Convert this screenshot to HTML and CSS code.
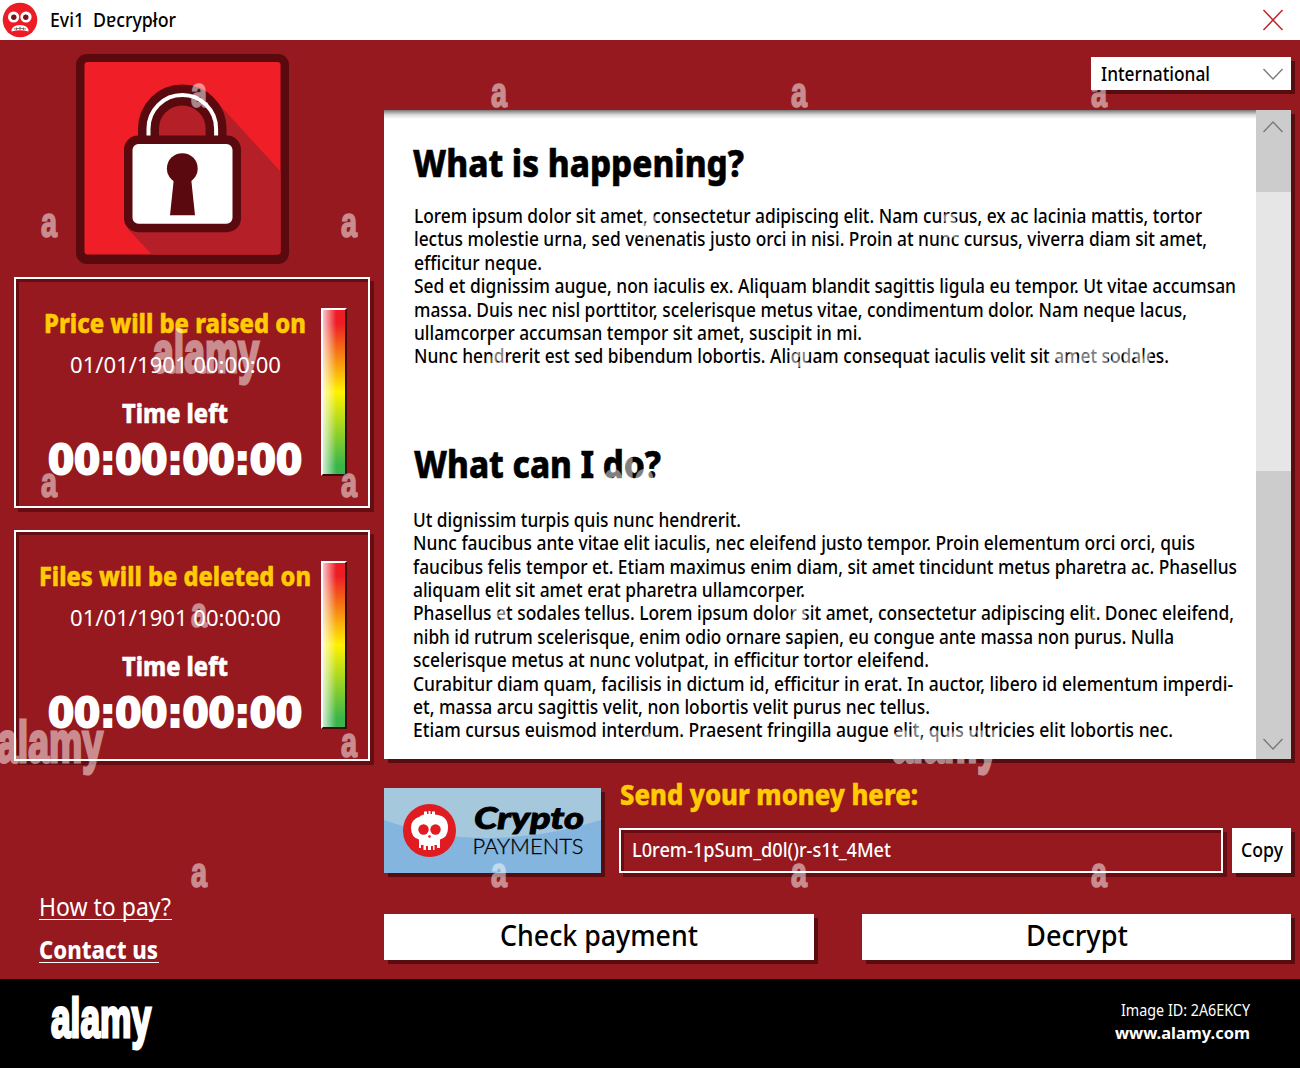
FILE: index.html
```html
<!DOCTYPE html>
<html lang="en">
<head>
<meta charset="utf-8">
<title>Evi1 Decryptor</title>
<link rel="stylesheet" href="styles.css">
</head>
<body>
<div class="window">
  <header class="titlebar">
    <svg class="face" width="36" height="36" viewBox="0 0 36 36">
      <circle cx="18" cy="18" r="17.3" fill="#ed1c24"/>
      <circle cx="11.6" cy="15" r="5.6" fill="#fff"/><circle cx="24" cy="15" r="5.6" fill="#fff"/>
      <circle cx="11.8" cy="15.2" r="2.7" fill="#7d1216"/><circle cx="23.8" cy="15.2" r="2.7" fill="#7d1216"/>
      <path d="M9.500 29.500q0-6.500 8.500-6.500t8.500 6.500q-8.500-2.500-17 0z" fill="#fff"/>
      <path d="M12 27q6-1.500 12 0M14.500 25.500v2.500M18 24.500v3.500M21.500 25.500v2.500" stroke="#555" fill="none" stroke-width=".8"/>
    </svg>
    <svg class="label app-name" width="128" height="24"><text x="0" y="19" textLength="34" lengthAdjust="spacingAndGlyphs">Evi1</text><text x="43" y="19" textLength="83" lengthAdjust="spacingAndGlyphs">Dɐcrypłor</text></svg>
    <svg class="close" width="22" height="22" viewBox="0 0 22 22"><path d="M1.500 1l19 20M20.500 1l-19 20" stroke="#c1272d" stroke-width="1.500" fill="none"/></svg>
  </header>

  <div class="content">
    <aside class="side">
      <svg class="lock" width="213" height="210" viewBox="0 0 213 211" preserveAspectRatio="none">
        <rect width="213" height="211" rx="11" fill="#5a0a0f"/>
        <rect x="8.500" y="8" width="196" height="193.500" rx="3" fill="#f01e27"/>
        <path d="M138 45L204.500 118V198.500q0 3-3 3H76L52 176z" fill="#b51f28"/>
        <path d="M66 84V77a40 40 0 0 1 80 0v7" fill="#b51f28" stroke="none"/>
        <path d="M72.500 90V75a33.800 33.800 0 0 1 67.600 0v15" fill="none" stroke="#5a0a0f" stroke-width="21"/>
        <path d="M72.500 90V75a33.800 33.800 0 0 1 67.600 0v15" fill="none" stroke="#fff" stroke-width="4"/>
        <rect x="48" y="82" width="117" height="97" rx="14" fill="#5a0a0f"/>
        <rect x="56.500" y="90.500" width="100" height="80" rx="6" fill="#fff"/>
        <circle cx="106.300" cy="115" r="15.400" fill="#5a0a0f"/>
        <path d="M98 124h17l4 38H94z" fill="#5a0a0f"/>
      </svg>

      <section class="panel">
        <div class="countdown">
          <svg class="label warn" width="262" height="34"><text x="0" y="26.500" textLength="262" lengthAdjust="spacingAndGlyphs">Price will be raised on</text></svg>
          <svg class="label date" width="211" height="42"><text x="0" y="33" textLength="211" lengthAdjust="spacingAndGlyphs">01/01/1901 00:00:00</text></svg>
          <svg class="label left" width="106" height="48"><text x="0" y="40.500" textLength="106" lengthAdjust="spacingAndGlyphs">Time left</text></svg>
          <svg class="label clock" width="256" height="56"><text x="1" y="43.500" textLength="254" lengthAdjust="spacingAndGlyphs">00:00:00:00</text></svg>
        </div>
        <div class="meter"></div>
      </section>

      <section class="panel">
        <div class="countdown">
          <svg class="label warn" width="272" height="34"><text x="0" y="26.500" textLength="272" lengthAdjust="spacingAndGlyphs">Files will be deleted on</text></svg>
          <svg class="label date" width="211" height="42"><text x="0" y="33" textLength="211" lengthAdjust="spacingAndGlyphs">01/01/1901 00:00:00</text></svg>
          <svg class="label left" width="106" height="48"><text x="0" y="40.500" textLength="106" lengthAdjust="spacingAndGlyphs">Time left</text></svg>
          <svg class="label clock" width="256" height="56"><text x="1" y="43.500" textLength="254" lengthAdjust="spacingAndGlyphs">00:00:00:00</text></svg>
        </div>
        <div class="meter"></div>
      </section>

      <nav class="links">
        <a class="link"><svg class="label how" width="133" height="28"><text x="0" y="23" textLength="132" lengthAdjust="spacingAndGlyphs">How to pay?</text></svg></a>
        <a class="link"><svg class="label contact" width="120" height="28"><text x="0" y="23" textLength="119" lengthAdjust="spacingAndGlyphs">Contact us</text></svg></a>
      </nav>
    </aside>

    <main class="main">
      <div class="select">
        <svg class="label body" width="110" height="24"><text x="0" y="18.700" textLength="109" lengthAdjust="spacingAndGlyphs">International</text></svg>
        <svg width="20" height="12" viewBox="0 0 20 12"><path d="M.5 1L10 11 19.500 1" stroke="#777" stroke-width="1.300" fill="none"/></svg>
      </div>

      <div class="reader">
        <article class="article">
          <svg class="label heading" width="332" height="60"><text x="-1" y="46" textLength="331" lengthAdjust="spacingAndGlyphs">What is happening?</text></svg>
          <svg class="label body first" width="840" height="170">
            <text x="0" y="18" textLength="788" lengthAdjust="spacingAndGlyphs">Lorem ipsum dolor sit amet, consectetur adipiscing elit. Nam cursus, ex ac lacinia mattis, tortor</text>
            <text x="0" y="41.400" textLength="793" lengthAdjust="spacingAndGlyphs">lectus molestie urna, sed venenatis justo orci in nisi. Proin at nunc cursus, viverra diam sit amet,</text>
            <text x="0" y="64.800" textLength="128" lengthAdjust="spacingAndGlyphs">efficitur neque.</text>
            <text x="0" y="88.200" textLength="822" lengthAdjust="spacingAndGlyphs">Sed et dignissim augue, non iaculis ex. Aliquam blandit sagittis ligula eu tempor. Ut vitae accumsan</text>
            <text x="0" y="111.600" textLength="773" lengthAdjust="spacingAndGlyphs">massa. Duis nec nisl porttitor, scelerisque metus vitae, condimentum dolor. Nam neque lacus,</text>
            <text x="0" y="135" textLength="448" lengthAdjust="spacingAndGlyphs">ullamcorper accumsan tempor sit amet, suscipit in mi.</text>
            <text x="0" y="158.400" textLength="755" lengthAdjust="spacingAndGlyphs">Nunc hendrerit est sed bibendum lobortis. Aliquam consequat iaculis velit sit amet sodales.</text>
          </svg>
          <svg class="label heading" width="332" height="60"><text x="0" y="46" textLength="247" lengthAdjust="spacingAndGlyphs">What can I do?</text></svg>
          <svg class="label body" width="840" height="240">
            <text x="-1" y="17.700" textLength="328" lengthAdjust="spacingAndGlyphs">Ut dignissim turpis quis nunc hendrerit.</text>
            <text x="-1" y="41.100" textLength="782" lengthAdjust="spacingAndGlyphs">Nunc faucibus ante vitae elit iaculis, nec eleifend justo tempor. Proin elementum orci orci, quis</text>
            <text x="-1" y="64.500" textLength="824" lengthAdjust="spacingAndGlyphs">faucibus felis tempor et. Etiam maximus enim diam, sit amet tincidunt metus pharetra ac. Phasellus</text>
            <text x="-1" y="87.900" textLength="392" lengthAdjust="spacingAndGlyphs">aliquam elit sit amet erat pharetra ullamcorper.</text>
            <text x="-1" y="111.300" textLength="821" lengthAdjust="spacingAndGlyphs">Phasellus et sodales tellus. Lorem ipsum dolor sit amet, consectetur adipiscing elit. Donec eleifend,</text>
            <text x="-1" y="134.700" textLength="761" lengthAdjust="spacingAndGlyphs">nibh id rutrum scelerisque, enim odio ornare sapien, eu congue ante massa non purus. Nulla</text>
            <text x="-1" y="158.100" textLength="516" lengthAdjust="spacingAndGlyphs">scelerisque metus at nunc volutpat, in efficitur tortor eleifend.</text>
            <text x="-1" y="181.500" textLength="820" lengthAdjust="spacingAndGlyphs">Curabitur diam quam, facilisis in dictum id, efficitur in erat. In auctor, libero id elementum imperdi-</text>
            <text x="-1" y="204.900" textLength="517" lengthAdjust="spacingAndGlyphs">et, massa arcu sagittis velit, non lobortis velit purus nec tellus.</text>
            <text x="-1" y="228.300" textLength="760" lengthAdjust="spacingAndGlyphs">Etiam cursus euismod interdum. Praesent fringilla augue elit, quis ultricies elit lobortis nec.</text>
          </svg>
        </article>
        <div class="scrollbar">
          <svg width="20" height="12" viewBox="0 0 20 12"><path d="M.5 11L10 1l9.500 10" stroke="#777" stroke-width="1.300" fill="none"/></svg>
          <div class="thumb"></div>
          <svg width="20" height="12" viewBox="0 0 20 12"><path d="M.5 1L10 11 19.500 1" stroke="#777" stroke-width="1.300" fill="none"/></svg>
        </div>
      </div>

      <div class="payment">
        <svg class="banner" width="217" height="85" viewBox="0 0 217 85">
          <rect width="217" height="85" fill="#a5c8dd"/>
          <path d="M0 32Q100 68 217 32V85H0z" fill="#83b5de"/>
          <circle cx="45.500" cy="42.500" r="26.500" fill="#e01b22"/>
          <path d="M36 28q3-1.500 4-1.500V23.500h3v2.500h1.500v-3h2v3H48v-2.500h3v3q13 1 13 13 0 10-8 12v8.500h-3v-3h-2.500v5H49V58h-2v4h-3v-4h-2v4h-2.500v-5H37v3h-2v-8.500q-8-2-8-12 0-8 9-11z" fill="#fff"/>
          <circle cx="39.500" cy="41.500" r="5.200" fill="#e01b22"/><circle cx="51.500" cy="41.500" r="5.200" fill="#e01b22"/>
          <circle cx="45.500" cy="48.500" r="1.300" fill="#e01b22"/>
          <text class="brand" x="90" y="41" textLength="110" lengthAdjust="spacingAndGlyphs">Crypto</text>
          <text class="brand-sub" x="88.500" y="65.500" textLength="111" lengthAdjust="spacingAndGlyphs">PAYMENTS</text>
        </svg>
        <div class="send">
          <svg class="label send-title" width="300" height="40"><text x="1" y="17" textLength="298" lengthAdjust="spacingAndGlyphs">Send your money here:</text></svg>
          <div class="send-row">
            <div class="address"><svg class="label body" width="260" height="24"><text x="1" y="17.500" textLength="259" lengthAdjust="spacingAndGlyphs">L0rem-1pSum_d0l()r-s1t_4Met</text></svg></div>
            <div class="button copy"><svg class="label body" width="42" height="24"><text x="0" y="17.500" textLength="42" lengthAdjust="spacingAndGlyphs">Copy</text></svg></div>
          </div>
        </div>
      </div>

      <div class="actions">
        <div class="button"><svg class="label action" width="198" height="34"><text x="0" y="25.500" textLength="198" lengthAdjust="spacingAndGlyphs">Check payment</text></svg></div>
        <div class="button"><svg class="label action" width="102" height="34"><text x="0" y="25.500" textLength="102" lengthAdjust="spacingAndGlyphs">Decrypt</text></svg></div>
      </div>
    </main>
  </div>
</div>

<footer class="footer">
  <svg class="label stock" width="102" height="56"><text x="1" y="42" textLength="100" lengthAdjust="spacingAndGlyphs">alamy</text></svg>
  <div class="credit">
    <svg class="label image-id" width="130" height="22"><text x="1" y="16.500" textLength="129" lengthAdjust="spacingAndGlyphs">Image ID: 2A6EKCY</text></svg>
    <svg class="label site" width="136" height="24"><text x="1" y="18" textLength="135" lengthAdjust="spacingAndGlyphs">www.alamy.com</text></svg>
  </div>
</footer>

<svg class="watermark" width="1300" height="979" viewBox="0 0 1300 979">
  <g class="mark-small">
    <text x="191" y="107" textLength="16" lengthAdjust="spacingAndGlyphs">a</text><text x="491" y="107" textLength="16" lengthAdjust="spacingAndGlyphs">a</text><text x="791" y="107" textLength="16" lengthAdjust="spacingAndGlyphs">a</text><text x="1091" y="107" textLength="16" lengthAdjust="spacingAndGlyphs">a</text>
    <text x="41" y="237" textLength="16" lengthAdjust="spacingAndGlyphs">a</text><text x="341" y="237" textLength="16" lengthAdjust="spacingAndGlyphs">a</text><text x="641" y="237" textLength="16" lengthAdjust="spacingAndGlyphs">a</text><text x="941" y="237" textLength="16" lengthAdjust="spacingAndGlyphs">a</text>
    <text x="491" y="367" textLength="16" lengthAdjust="spacingAndGlyphs">a</text><text x="791" y="367" textLength="16" lengthAdjust="spacingAndGlyphs">a</text>
    <text x="41" y="497" textLength="16" lengthAdjust="spacingAndGlyphs">a</text><text x="341" y="497" textLength="16" lengthAdjust="spacingAndGlyphs">a</text>
    <text x="191" y="627" textLength="16" lengthAdjust="spacingAndGlyphs">a</text><text x="491" y="627" textLength="16" lengthAdjust="spacingAndGlyphs">a</text><text x="791" y="627" textLength="16" lengthAdjust="spacingAndGlyphs">a</text><text x="1091" y="627" textLength="16" lengthAdjust="spacingAndGlyphs">a</text>
    <text x="341" y="757" textLength="16" lengthAdjust="spacingAndGlyphs">a</text><text x="641" y="757" textLength="16" lengthAdjust="spacingAndGlyphs">a</text>
    <text x="191" y="887" textLength="16" lengthAdjust="spacingAndGlyphs">a</text><text x="491" y="887" textLength="16" lengthAdjust="spacingAndGlyphs">a</text><text x="791" y="887" textLength="16" lengthAdjust="spacingAndGlyphs">a</text><text x="1091" y="887" textLength="16" lengthAdjust="spacingAndGlyphs">a</text>
  </g>
  <g class="mark-large">
    <text x="153" y="371.500" textLength="106" lengthAdjust="spacingAndGlyphs">alamy</text>
    <text x="1047" y="371.500" textLength="106" lengthAdjust="spacingAndGlyphs">alamy</text>
    <text x="603" y="500.500" textLength="106" lengthAdjust="spacingAndGlyphs">alamy</text>
    <text x="-3" y="761.500" textLength="106" lengthAdjust="spacingAndGlyphs">alamy</text>
    <text x="892" y="761.500" textLength="106" lengthAdjust="spacingAndGlyphs">alamy</text>
  </g>
</svg>
</body>
</html>
```
FILE: styles.css
```css
* { box-sizing: border-box; }
body {
  margin: 0;
  position: relative;
  width: 1300px;
  height: 1068px;
  overflow: hidden;
  background: #000;
  font-family: "Noto Sans", "Open Sans", sans-serif;
}
svg { display: block; flex: none; }
.label { overflow: visible; }

.window { height: 979px; background: #95191e; display: flex; flex-direction: column; }
.titlebar {
  height: 39.5px;
  background: #fff;
  display: flex;
  align-items: center;
  padding: 0 16px 0 2px;
}
.app-name { margin-left: 12px; font-size: 19px; font-weight: 500; }
.close { margin-left: auto; }

.content { flex: 1; display: flex; }
.side { width: 384px; padding: 14px 14px 0; display: flex; flex-direction: column; }
.lock { margin: 0 0 13.5px 62px; }

.panel {
  width: 356px;
  height: 231px;
  margin-bottom: 22px;
  border: 2.5px solid #fff;
  box-shadow: 4px 4px 0 #650d11, inset 3px 3px 0 #650d11;
  display: flex;
}
.countdown {
  width: 318px;
  padding-top: 27px;
  display: flex;
  flex-direction: column;
  align-items: center;
}
.warn { fill: #ffcb05; stroke: #ffcb05; stroke-width: .5px; font-size: 26px; font-weight: 800; }
.date { fill: #fff; font-size: 21.5px; }
.left { fill: #fff; stroke: #fff; stroke-width: .5px; font-size: 26px; font-weight: 800; }
.clock {
  fill: #fff;
  stroke: #fff;
  stroke-width: 2px;
  stroke-linejoin: miter;
  font-family: "DejaVu Sans Condensed", "DejaVu Sans", sans-serif;
  font-size: 40px;
  font-weight: 700;
}
.meter {
  width: 26px;
  height: 168px;
  margin: 28.5px 0 0 -13px;
  border: 2px solid;
  border-color: #fff #3b0d0d #3b0d0d #fff;
  background:
    linear-gradient(to right, rgba(255,255,255,.75), rgba(255,255,255,0) 60%),
    linear-gradient(#ee1c25 8%, #fff200 50%, #39b54a 95%);
}

.links { margin: 110px 0 0 25px; display: flex; flex-direction: column; align-items: flex-start; gap: 16px; }
.link { border-bottom: 1.5px solid #fff; height: 27px; }
.how, .contact { fill: #fff; font-size: 25px; }
.contact { font-weight: 800; }

.main { width: 907px; padding-top: 17.5px; }
.select {
  width: 200px;
  height: 33px;
  margin-left: auto;
  padding: 0 8px 0 10px;
  background: #fff;
  box-shadow: 4px 4px 0 #570c10;
  display: flex;
  align-items: center;
  justify-content: space-between;
}
.body { font-size: 19.3px; font-weight: 500; }

.reader {
  height: 649px;
  margin-top: 20px;
  background: #fff;
  box-shadow: 4px 4px 0 #570c10;
  display: flex;
}
.article {
  flex: 1;
  padding: 21px 0 0 30px;
  background: linear-gradient(#777, #ddd 5px, #fff 9px);
}
.heading { font-size: 38px; font-weight: 800; stroke: #000; stroke-width: .6px; }
.article .body { margin-top: 14px; }
.article .first { margin-bottom: 57px; }
.article .first + .heading + .body { margin-top: 17px; }
.scrollbar {
  width: 35px;
  padding: 11px 0 9px;
  background: #ccc;
  display: flex;
  flex-direction: column;
  align-items: center;
}
.scrollbar svg { margin-right: 2px; }
.thumb { width: 35px; height: 279px; margin: 59px 0 auto; background: #e6e6e6; }

.payment { display: flex; gap: 18px; margin-top: 29px; }
.banner { box-shadow: 4px 4px 0 #570c10; }
.brand { font: italic 900 30px Lato, sans-serif; stroke: #000; stroke-width: .9px; }
.brand-sub { font: 300 21px Lato, sans-serif; stroke: #000; stroke-width: .3px; }
.send { flex: 1; }
.send-title { fill: #ffcb05; stroke: #ffcb05; stroke-width: .5px; font-size: 27.5px; font-weight: 800; }
.send-row { display: flex; gap: 9px; }
.address {
  flex: 1;
  height: 45px;
  padding-left: 10px;
  border: 2.5px solid #fff;
  box-shadow: 4px 4px 0 #650d11, inset 3px 3px 0 #650d11;
  display: flex;
  align-items: center;
}
.address .label { fill: #fff; }
.button {
  height: 46px;
  background: #fff;
  box-shadow: 4px 4px 0 #570c10;
  display: flex;
  align-items: center;
  justify-content: center;
}
.copy { width: 59px; height: 45px; }
.actions { display: grid; grid-template-columns: 430px 429px; gap: 48px; margin-top: 41px; }
.action { font-size: 29.5px; font-weight: 500; }

.footer {
  height: 89px;
  padding: 0 50px;
  display: flex;
  justify-content: space-between;
}
.label.stock {
  margin-top: 16px;
  fill: #fff;
  stroke: #fff;
  stroke-width: 3px;
  font: 700 55px "Liberation Sans", sans-serif;
}
.credit { display: flex; flex-direction: column; align-items: flex-end; padding-top: 20px; fill: #fff; }
.image-id { font-size: 15.5px; }
.site { font-size: 16.5px; font-weight: 700; }

.watermark {
  position: absolute;
  top: 0;
  left: 0;
  pointer-events: none;
  fill: #fff;
  stroke: #fff;
  opacity: .5;
  font-family: "Liberation Sans", sans-serif;
  font-weight: 700;
}
.mark-small { font-size: 42px; stroke-width: 1.6px; }
.mark-large { font-size: 58px; stroke-width: 3px; }
```
